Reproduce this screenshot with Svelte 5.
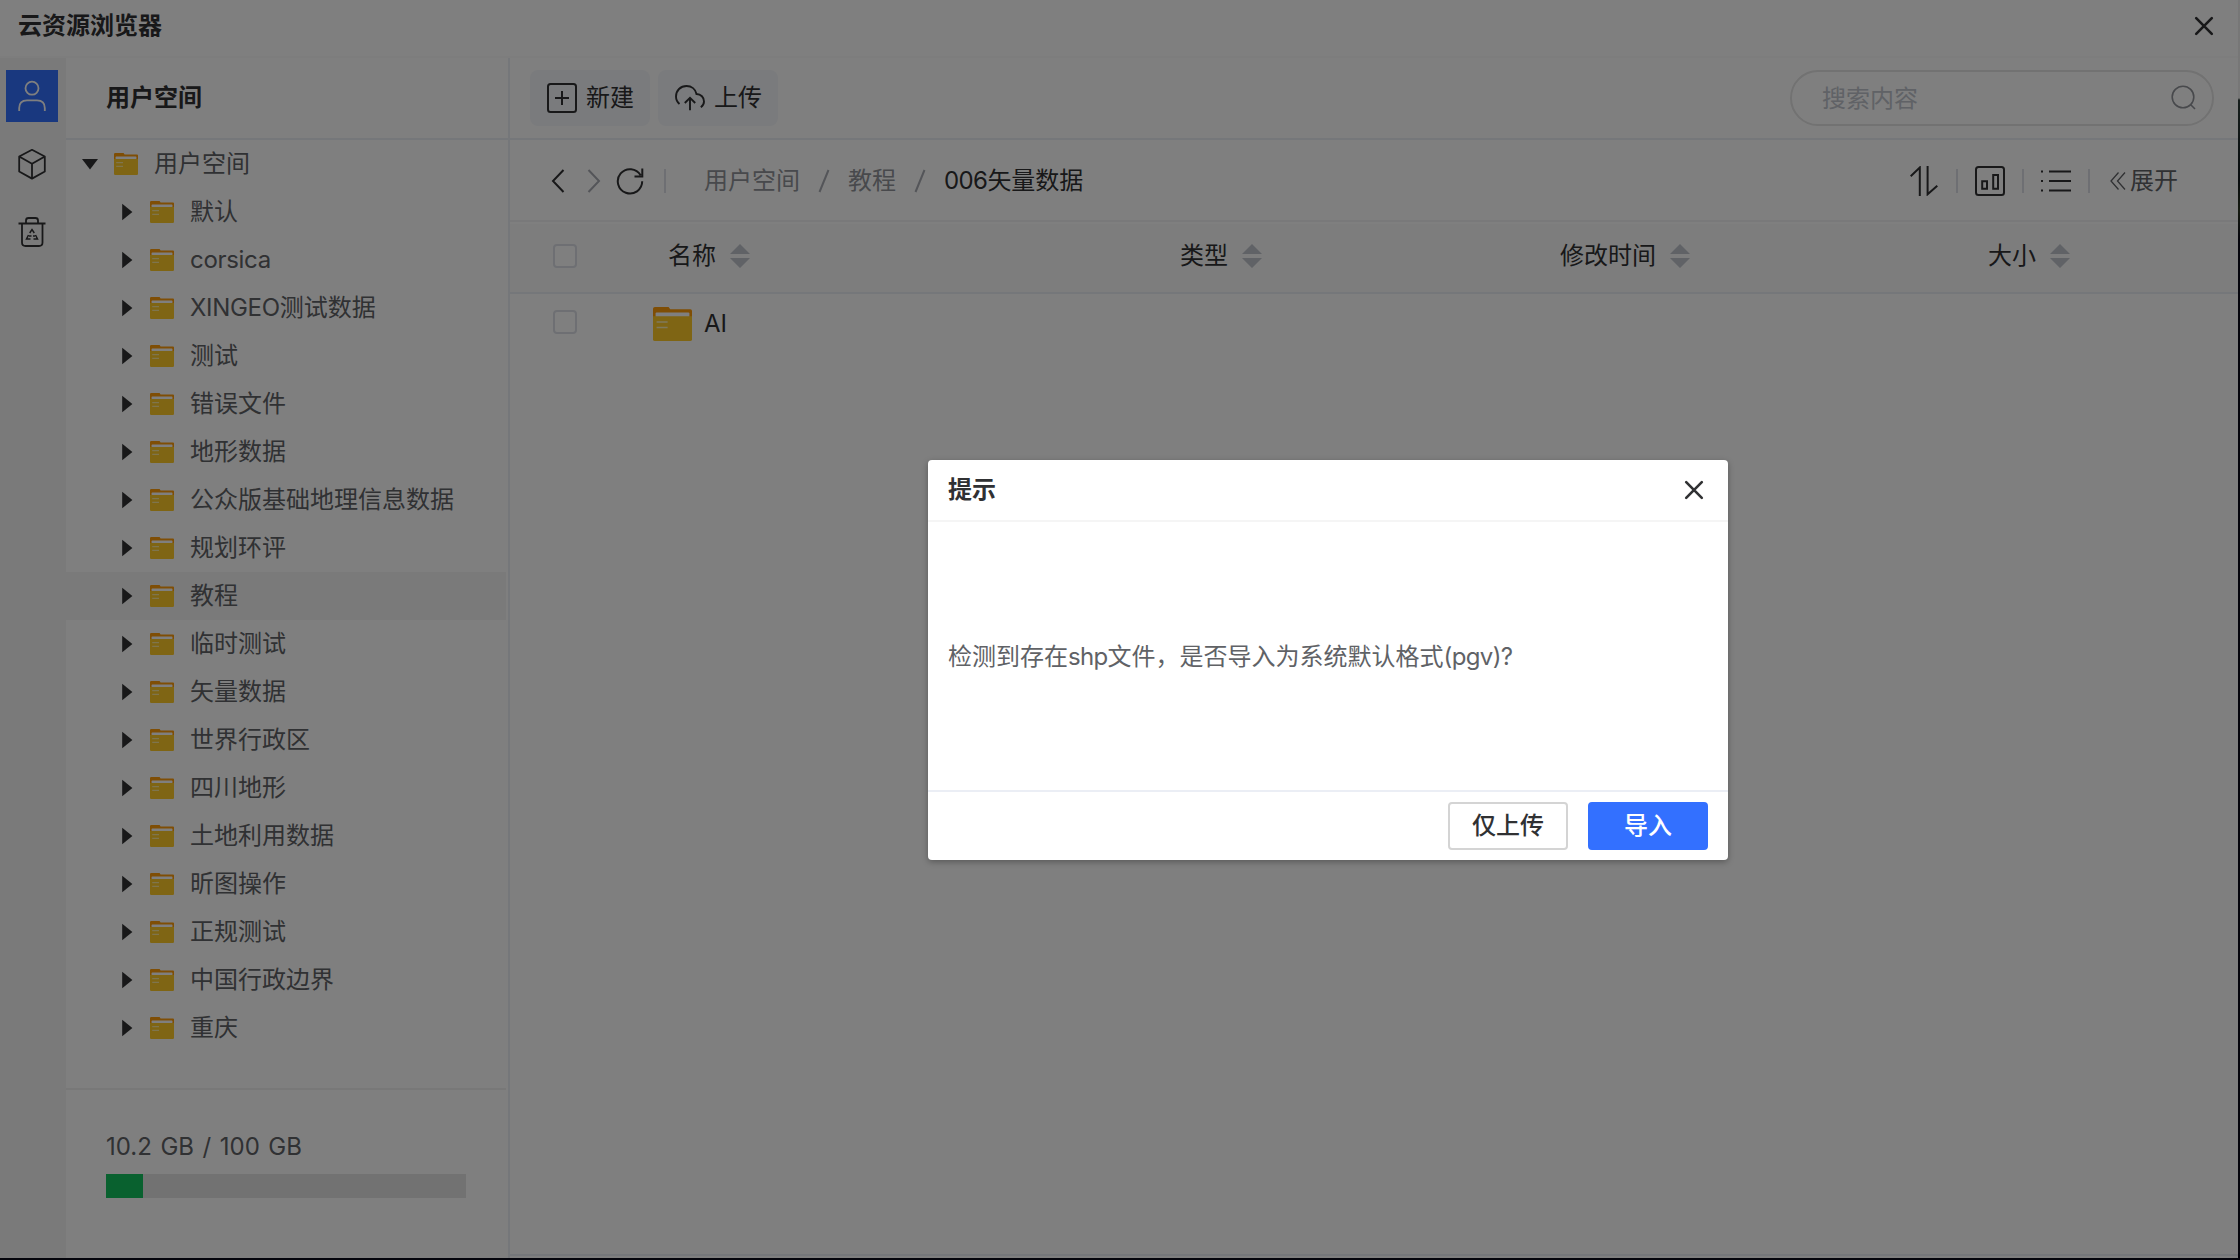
<script>
  const folders = ['默认', 'corsica', 'XINGEO测试数据', '测试', '错误文件', '地形数据', '公众版基础地理信息数据', '规划环评', '教程', '临时测试', '矢量数据', '世界行政区', '四川地形', '土地利用数据', '昕图操作', '正规测试', '中国行政边界', '重庆'];
  const selected = '教程';
  const columns = [
    { label: '名称', cls: 'name' },
    { label: '类型', cls: 'type' },
    { label: '修改时间', cls: 'time' },
    { label: '大小', cls: 'size' }
  ];
  const used = 10.2;
  const total = 100;
  const message = '检测到存在shp文件，是否导入为系统默认格式(pgv)?';

  // Splits mixed text into runs so Latin runs can be tracked tighter than CJK ones.
  const runs = (text) => text.match(/[\x20-\x7e]+|[^\x20-\x7e]+/g).map((t) => ({ t, latin: /^[\x20-\x7e]/.test(t) }));
</script>

{#snippet mixed(text)}{#each runs(text) as run}<span class:latin={run.latin}>{run.t}</span>{/each}{/snippet}

{#snippet folder(cls)}
  <svg class={cls} viewBox="0 0 24 22" preserveAspectRatio="none">
    <path d="M0 1.2Q0 0 1.2 0H9.6L10.6 1.4H23Q24 1.4 24 2.6V8H0Z" fill="#ff9c0a" />
    <rect x="1.6" y="3.6" width="20.8" height="4" rx=".6" fill="#fff" />
    <path d="M0 6H24V20.8Q24 22 22.8 22H1.2Q0 22 0 20.8Z" fill="#ffca28" />
    <path d="M2.2 9.7H9M2.2 13.3H9" stroke="#fff2b8" stroke-width="1" />
  </svg>
{/snippet}

{#snippet cross(cls)}
  <svg class={cls} viewBox="0 0 20 20" fill="none" stroke="#303133" stroke-width="2.6" stroke-linecap="round">
    <path d="M2.2 2.2 17.8 17.8M17.8 2.2 2.2 17.8" />
  </svg>
{/snippet}

<div class="screen">
  <div class="window">
    <header class="titlebar">
      <h1>云资源浏览器</h1>
      {@render cross('x')}
    </header>
    <div class="main">
      <nav class="rail">
        <button class="active" aria-label="用户空间">
          <svg viewBox="0 0 52 52" fill="none" stroke="#fff" stroke-width="1.8">
            <circle cx="26" cy="18.2" r="6.5" />
            <path d="M13.2 41V38Q13.2 30.3 21 30.3H31Q38.8 30.3 38.8 38V41" />
          </svg>
        </button>
        <button aria-label="模型">
          <svg viewBox="0 0 52 52" fill="none" stroke="#303133" stroke-width="1.8" stroke-linejoin="round">
            <path d="M26 11.8 38.8 18.5V33.5L26 40.6 13.2 33.5V18.5ZM13.2 18.5 26 25.8 38.8 18.5M26 25.8V40.6" />
          </svg>
        </button>
        <button aria-label="回收站">
          <svg viewBox="0 0 52 52" fill="none" stroke="#303133" stroke-width="1.8">
            <path d="M12.5 17.5H39.5M20 17V14.5Q20 12 22.5 12H29.5Q32 12 32 14.5V17M16 17.5V36.5Q16 40 19.5 40H33Q36.5 40 36.5 36.5V17.5" />
            <path d="M23.7 27 26 23.5 28.3 27M22.5 29 20.5 33H24.5M29.5 29 31.5 33H27.5M23 30H25.5M27 30H29" stroke-width="1.5" />
          </svg>
        </button>
      </nav>
      <aside>
        <h2>用户空间</h2>
        <div class="tree">
          <div class="node root">
            <svg class="arrow" viewBox="0 0 16 16"><path d="M0 3H16L8 13.4Z" /></svg>
            {@render folder('fold')}
            <span>用户空间</span>
          </div>
          {#each folders as name}
            <div class="node" class:selected={name === selected}>
              <svg class="arrow" viewBox="0 0 16 16"><path d="M3.2 -.2V16.2L13.4 8Z" /></svg>
              {@render folder('fold')}
              {@render mixed(name)}
            </div>
          {/each}
        </div>
        <div class="storage">
          <p>{used} GB / {total} GB</p>
          <div class="meter"><div class="fill" style="width: {(used / total) * 100}%"></div></div>
        </div>
      </aside>
      <section>
        <div class="toolbar">
          <button class="tool">
            <svg viewBox="0 0 30 30" fill="none" stroke="#303133" stroke-width="2"><rect x="1" y="1" width="28" height="28" rx="2.5" /><path d="M15 8V22M8 15H22" /></svg>
            新建
          </button>
          <button class="tool">
            <svg viewBox="0 0 30 30" fill="none" stroke="#303133" stroke-width="1.9"><path d="M4.5 21Q1 18 1 13.5C1 7.5 5.5 3 11.5 3C16.5 3 20.5 6 21.5 11C26 11 29 14.5 29 18.5Q29 22 25.8 24.2M15 27.3V15.4M9.8 20 15 14.8 20.2 20" /></svg>
            上传
          </button>
          <div class="search">
            <span>搜索内容</span>
            <svg viewBox="0 0 26 26" fill="none" stroke="#909399" stroke-width="1.6"><circle cx="12" cy="12" r="10.8" /><path d="M19.5 19.5 24 24" /></svg>
          </div>
        </div>
        <div class="pathbar">
          <svg class="nav" viewBox="0 0 14 24" fill="none" stroke="#303133" stroke-width="2"><path d="M12.5 1 2 12 12.5 23" /></svg>
          <svg class="nav next" viewBox="0 0 14 24" fill="none" stroke="#a8abb2" stroke-width="2"><path d="M1.5 1 12 12 1.5 23" /></svg>
          <svg class="reload" viewBox="0 0 28 28" fill="none" stroke="#303133" stroke-width="2"><path d="M26.2 14.3A12.2 12.2 0 1 1 24.6 8.3M26.3 1.5V9.4H18.5" /></svg>
          <i class="sep"></i>
          <div class="crumbs">
            <span>用户空间</span>
            <svg viewBox="0 0 12 24" stroke="#a8abb2" stroke-width="2"><path d="M1.5 23 10.5 1" /></svg>
            <span>教程</span>
            <svg viewBox="0 0 12 24" stroke="#a8abb2" stroke-width="2"><path d="M1.5 23 10.5 1" /></svg>
            <b>{@render mixed('006矢量数据')}</b>
          </div>
          <div class="views">
            <svg viewBox="0 0 30 30" fill="none" stroke="#303133" stroke-width="2"><path d="M1.7 10.3 10.8 1.5V30M18.6 0V28.3L28.3 19.7" /></svg>
            <i class="sep"></i>
            <svg viewBox="0 0 30 30" fill="none" stroke="#303133" stroke-width="2"><rect x="1" y="1" width="28" height="28" rx="2.5" /><path d="M7.2 15.2H12V22.8H7.2ZM18.2 9H23V22.8H18.2Z" /></svg>
            <i class="sep"></i>
            <svg viewBox="0 0 30 30" fill="none" stroke="#303133" stroke-width="2"><path d="M8 5.5H30M8 15H30M8 24.5H30M0 5.5H2M0 15H2M0 24.5H2" /></svg>
            <i class="sep"></i>
            <div class="expand">
              <svg viewBox="0 0 16 18" fill="none" stroke="#606266" stroke-width="1.3"><path d="M8.5 .5 1 9 8.5 17.5M15 .5 7.5 9 15 17.5" /></svg>
              展开
            </div>
          </div>
        </div>
        <div class="thead">
          <i class="check"></i>
          {#each columns as col}
            <div class="col {col.cls}">
              {col.label}
              <svg viewBox="0 0 20 24" fill="#c0c4cc"><path d="M0 10 10 0 20 10ZM0 14H20L10 24Z" /></svg>
            </div>
          {/each}
        </div>
        <div class="row">
          <i class="check"></i>
          {@render folder('big')}
          <span>AI</span>
        </div>
      </section>
    </div>
  </div>
  <div class="mask">
    <div class="dialog">
      <header>
        <h3>提示</h3>
        {@render cross('x')}
      </header>
      <p>{@render mixed(message)}</p>
      <footer>
        <button>仅上传</button>
        <button class="primary">导入</button>
      </footer>
    </div>
  </div>
</div>

<style>
  :global(body) { margin: 0; background: #05050c; }
  * { box-sizing: border-box; margin: 0; }
  svg { display: block; flex: none; }
  button { border: 0; padding: 0; background: none; font: inherit; color: inherit; display: flex; align-items: center; }
  .screen {
    position: relative; width: 2240px; height: 1260px; overflow: hidden;
    background: linear-gradient(#eee 0 98px, #2c3c38 100px, #10181c 180px, #2a3420 210px, #0a0a18 240px);
    font: 24px/34px Inter, "Noto Sans CJK SC", sans-serif; color: #303133; white-space: nowrap;
  }
  .window { width: 2238px; height: 1258px; background: #fff; display: flex; flex-direction: column; }
  .titlebar { height: 58px; flex: none; display: flex; align-items: center; justify-content: space-between; padding: 0 24px 4px 18px; border-bottom: 2px solid #fafafa; }
  h1, h2, h3 { font-size: 24px; line-height: 34px; font-weight: 600; }
  .latin { letter-spacing: -.3px; }
  .x { width: 20px; height: 20px; }
  .main { flex: 1; min-height: 0; display: flex; }
  .rail { width: 66px; flex: none; background: #f5f5f5; padding: 12px 6px; display: flex; flex-direction: column; gap: 16px; }
  .rail button, .rail svg { width: 52px; height: 52px; }
  .rail .active { background: #3370ff; }
  aside { width: 444px; flex: none; border-right: 2px solid #ebeef5; display: flex; flex-direction: column; }
  h2 { height: 82px; padding: 23px 40px; border-bottom: 2px solid #ebeef5; }
  .tree { height: 948px; padding-right: 2px; color: #606266; }
  .node { height: 48px; display: flex; align-items: center; padding-left: 53px; }
  .node.root { padding-left: 16px; }
  .node.selected { background: #f5f5f5; }
  .arrow { width: 16px; height: 16px; fill: #303133; margin-right: 15px; overflow: visible; }
  .root .arrow { margin-right: 16px; }
  .fold { width: 24px; height: 22px; margin-right: 16px; }
  .storage { margin-right: 2px; border-top: 2px solid #f0f0f0; flex: 1; padding: 40px 40px 0; color: #606266; }
  .storage p { line-height: 34px; word-spacing: 1.8px; }
  .meter { width: 360px; height: 24px; background: #e4e4e4; margin-top: 10px; }
  .fill { height: 100%; background: #13c25f; }
  section { flex: 1; min-width: 0; height: 1198px; border-bottom: 2px solid #ebeef5; }
  .toolbar { height: 82px; border-bottom: 2px solid #ebeef5; display: flex; align-items: center; gap: 8px; padding: 0 24px 0 20px; }
  .tool { width: 120px; height: 56px; border-radius: 8px; background: #f5f7fa; gap: 9px; padding-left: 17px; }
  .tool svg { width: 30px; height: 30px; }
  .search { margin-left: auto; width: 424px; height: 56px; border: 2px solid #e4e4e4; border-radius: 28px; display: flex; align-items: center; justify-content: space-between; padding: 0 15px 0 30px; color: #c0c4cc; }
  .search span { padding-top: 2px; }
  .search svg { width: 26px; height: 26px; }
  .pathbar { height: 82px; border-bottom: 2px solid #f2f3f5; display: flex; align-items: center; padding: 2px 60px 0 41px; }
  .nav { width: 14px; height: 24px; }
  .next { margin-left: 22px; }
  .reload { width: 28px; height: 28px; margin: 0 20px 0 15px; }
  .sep { width: 2px; height: 24px; background: #dcdfe6; flex: none; }
  .crumbs { display: flex; align-items: center; margin-left: 38px; color: #909399; }
  .crumbs svg { width: 12px; height: 24px; margin: 0 18px; }
  .crumbs b { font-weight: 400; color: #303133; }
  .crumbs .latin, .crumbs b .latin { letter-spacing: -.6px; }
  .views { margin-left: auto; display: flex; align-items: center; gap: 17px; }
  .views > svg { width: 30px; height: 30px; }
  .expand { display: flex; align-items: center; gap: 4px; color: #606266; margin-left: 3px; }
  .expand svg { width: 16px; height: 18px; }
  .thead { height: 70px; margin-top: 2px; padding: 0 0 4px 43px; border-bottom: 2px solid #ebeef5; background: #fafafa; display: grid; grid-template-columns: 115px 512px 380px 428px auto; align-items: center; }
  .col { display: flex; align-items: center; gap: 14px; }
  .col svg { width: 20px; height: 24px; }
  .check { width: 24px; height: 24px; border: 2px solid #dcdfe6; border-radius: 4px; background: #fff; flex: none; }
  .row { display: flex; align-items: center; height: 56px; padding-left: 43px; }
  .big { width: 39px; height: 34px; margin: 4px 12px 0 76px; }
  .row span { padding-top: 4px; }
  .mask { position: absolute; inset: 0; background: rgba(0, 0, 0, .5); }
  .dialog { position: absolute; left: 928px; top: 460px; width: 800px; height: 400px; background: #fff; border-radius: 4px; box-shadow: 0 2px 6px rgba(0, 0, 0, .3); display: flex; flex-direction: column; }
  .dialog header { height: 62px; border-bottom: 2px solid #f5f5f5; display: flex; align-items: center; justify-content: space-between; padding: 0 24px 0 20px; }
  .dialog p { flex: 1; display: flex; align-items: center; padding: 2px 20px 0; color: #606266; }
  .dialog p .latin { letter-spacing: -.65px; }
  .dialog footer { height: 70px; border-top: 2px solid #ebeef5; display: flex; justify-content: flex-end; align-items: center; gap: 20px; padding-right: 20px; }
  .dialog button { width: 120px; height: 48px; border: 2px solid #d4d4d4; border-radius: 4px; justify-content: center; font-weight: 500; }
  .dialog .primary { background: #3370ff; border-color: #3370ff; color: #fff; }
</style>
